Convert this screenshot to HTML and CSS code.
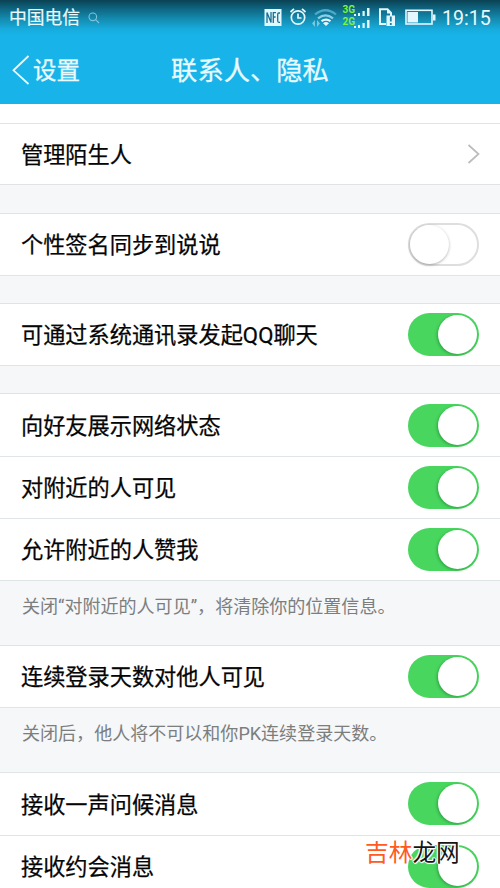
FILE: index.html
```html
<!DOCTYPE html>
<html lang="zh-CN">
<head>
<meta charset="utf-8">
<title>联系人、隐私</title>
<link rel="stylesheet" href="styles.css">
</head>
<body>
<header class="header">
  <div class="status">
    <span class="carrier">中国电信</span>
    <svg class="search" width="12" height="12" viewBox="0 0 12 12" fill="none" stroke="#7fc4dc" stroke-width="1.1"><circle cx="4.8" cy="4.8" r="3.8"/><path d="M7.6 7.6 11 11"/></svg>
    <svg class="icons" width="176" height="36" viewBox="264 0 176 36" fill="none">
      <rect x="264.5" y="9" width="17" height="17" fill="#e4f7ff"/>
      <path d="M267 23V12.5L271 22.5V12M273.3 23V12.7H276M273.3 17H275.6M280 13H278.8Q277.7 13 277.7 14.5V20.8Q277.7 22.3 278.8 22.3H280" stroke="#167291" stroke-width="1.3"/>
      <g stroke="#e4f7ff" stroke-width="1.7"><circle cx="298" cy="17.5" r="6.7"/><path d="M298 13.5V18H301.5M290.5 12 294 8.8M302 8.8 305.5 12"/></g>
      <g stroke-width="2.2"><path d="M315 14.5Q325.5 6 336 14.5" stroke="#4aa9c9"/><path d="M318 18.3Q325.5 12.5 333 18.3" stroke="#8dcee4"/><path d="M321.5 21.2Q326 18 330.5 21.2" stroke="#e4f7ff"/></g>
      <path d="M323 23.2Q326 21 329 23.2L326 26Z" fill="#e4f7ff"/>
      <path d="M315 20V27L312 23.5ZM317 20V27L320 23.5Z" fill="#7bc6df"/>
      <g class="net"><text x="342.5" y="12.7">3G</text><text x="342.5" y="25">2G</text></g>
      <path d="M354 14h2v2h-2zM358 13h2v3h-2zM362.5 11h2.2v5h-2.2zM367 8h2.5v8H367zM354 26h2v2h-2zM358 25h2v3h-2zM362.5 23h2.2v5h-2.2zM367 20h2.5v8H367z" fill="#e4f7ff"/>
      <path d="M386 24H380V9.3H387.5L391 12.8V16" stroke="#e4f7ff" stroke-width="2"/><path d="M387 9V13.5H391.5Z" fill="#e4f7ff"/>
      <path d="M386.5 15.5H395V26H386.5Z" fill="#e4f7ff"/><path d="M390.8 16.5V21.5M390.8 23V25" stroke="#1684a8" stroke-width="1.8"/>
      <rect x="406" y="10.3" width="26" height="13.7" stroke="#e4f7ff" stroke-width="1.6"/><path d="M407.5 12H418V22.5H407.5ZM433 14.5H435.5V20.5H433Z" fill="#e4f7ff"/>
    </svg>
    <span class="time">19:15</span>
  </div>
  <nav class="nav">
    <div class="back"><svg width="18" height="30" viewBox="0 0 18 30" fill="none" stroke="#e9faff" stroke-width="1.8"><path d="M16.5 1 1.5 15.3 16.5 29"/></svg><span>设置</span></div>
    <h1 class="title">联系人、隐私</h1>
  </nav>
</header>
<main class="list">
  <div class="spacer"></div>
  <section class="group first"><div class="row"><span>管理陌生人</span><svg class="chevron" width="13" height="20" viewBox="0 0 13 20" fill="none" stroke="#bcbcbe" stroke-width="1.7"><path d="M1.5 1 11.5 10 1.5 19"/></svg></div></section>
  <section class="group"><div class="row"><span>个性签名同步到说说</span><i class="switch off"></i></div></section>
  <section class="group"><div class="row"><span>可通过系统通讯录发起QQ聊天</span><i class="switch"></i></div></section>
  <section class="group">
    <div class="row"><span>向好友展示网络状态</span><i class="switch"></i></div>
    <div class="row"><span>对附近的人可见</span><i class="switch"></i></div>
    <div class="row"><span>允许附近的人赞我</span><i class="switch"></i></div>
  </section>
  <p class="note">关闭“对附近的人可见”，将清除你的位置信息。</p>
  <section class="group"><div class="row"><span>连续登录天数对他人可见</span><i class="switch"></i></div></section>
  <p class="note">关闭后，他人将不可以和你PK连续登录天数。</p>
  <section class="group">
    <div class="row"><span>接收一声问候消息</span><i class="switch"></i></div>
    <div class="row"><span>接收约会消息</span><i class="switch"></i></div>
  </section>
</main>
<div class="watermark"><span>吉林</span>龙网</div>
</body>
</html>
```
FILE: styles.css
```css
* { box-sizing: border-box; }
body {
  margin: 0;
  height: 888px;
  overflow: hidden;
  position: relative;
  background: #f5f7f9;
  color: #050505;
  font-family: Roboto, "Noto Sans CJK SC", sans-serif;
}
.header {
  height: 104px;
  color: #e9faff;
  background: linear-gradient(#0b4254 0, #0f6a87 10px, #148fb5 20px, #17abdc 29px, #18b4e9 36px);
}
.status { height: 36px; display: flex; align-items: center; padding: 0 9px; }
.carrier { font-size: 17.8px; line-height: 34px; -webkit-text-stroke: .2px; }
.search { margin-left: 8px; }
.icons { margin-left: auto; }
.net { fill: #7df23c; font: bold 10px Roboto, sans-serif; }
.time { width: 51px; padding: 1px 0 0 2px; font-size: 19.6px; line-height: 36px; white-space: nowrap; }
.nav { height: 68px; display: grid; grid-template-columns: 130px 240px 130px; align-items: center; }
.back { display: flex; align-items: center; gap: 3px; padding-left: 12px; font-size: 23.5px; line-height: 34px; -webkit-text-stroke: .3px; }
.back span { padding-top: 1px; }
.title { margin: 0; padding-top: 1px; font-size: 26.3px; font-weight: 400; line-height: 36px; text-align: center; white-space: nowrap; -webkit-text-stroke: .3px; }
.spacer { height: 19px; background: #fff; }
.group { border-top: 1px solid #dfe5e6; margin-bottom: 27px; }
.first { margin-bottom: 28px; }
.first .row { height: 61px; }
.row {
  height: 62px;
  display: flex;
  align-items: center;
  justify-content: space-between;
  padding: 0 21px;
  background: #fff;
  border-bottom: 1px solid #dfe5e6;
  font-size: 22.2px;
  line-height: 32px;
}
.row span { padding-top: 1px; -webkit-text-stroke: .25px; }
.first .row span { padding-top: 2px; }
.group:has(+ .note) { margin-bottom: 0; }
.group:has(.row + .row) .row:first-child { height: 63px; }
.group:last-child .row:first-child { height: 62px; }
.note { margin: 0; height: 64px; padding: 11px 22px 0; font-size: 18.05px; line-height: 30px; color: #7c7e7e; white-space: nowrap; }
.chevron { margin-right: -1px; }
.switch { width: 71px; height: 43px; padding: 2px; border-radius: 22px; background: #48d65f; display: flex; justify-content: flex-end; }
.switch::before { content: ""; width: 39px; height: 39px; border-radius: 50%; background: #fff; box-shadow: -1px 1px 3px rgba(0, 70, 15, .35); }
.off { background: #fff; border: 2px solid #dedede; padding: 0; justify-content: flex-start; }
.off::before { box-shadow: 0 1px 3px rgba(0, 0, 0, .3); }
.group:last-child .switch { margin-top: -1px; }
.watermark {
  position: absolute;
  left: 365px;
  top: 835px;
  color: #151515;
  font-size: 23.7px;
  line-height: 36px;
  text-shadow: 1px 0 #fff, -1px 0 #fff, 0 1px #fff, 0 -1px #fff, 1px 1px 1px #fff, -1px -1px 1px #fff;
}
.watermark span { color: #ff5a1f; }
```
